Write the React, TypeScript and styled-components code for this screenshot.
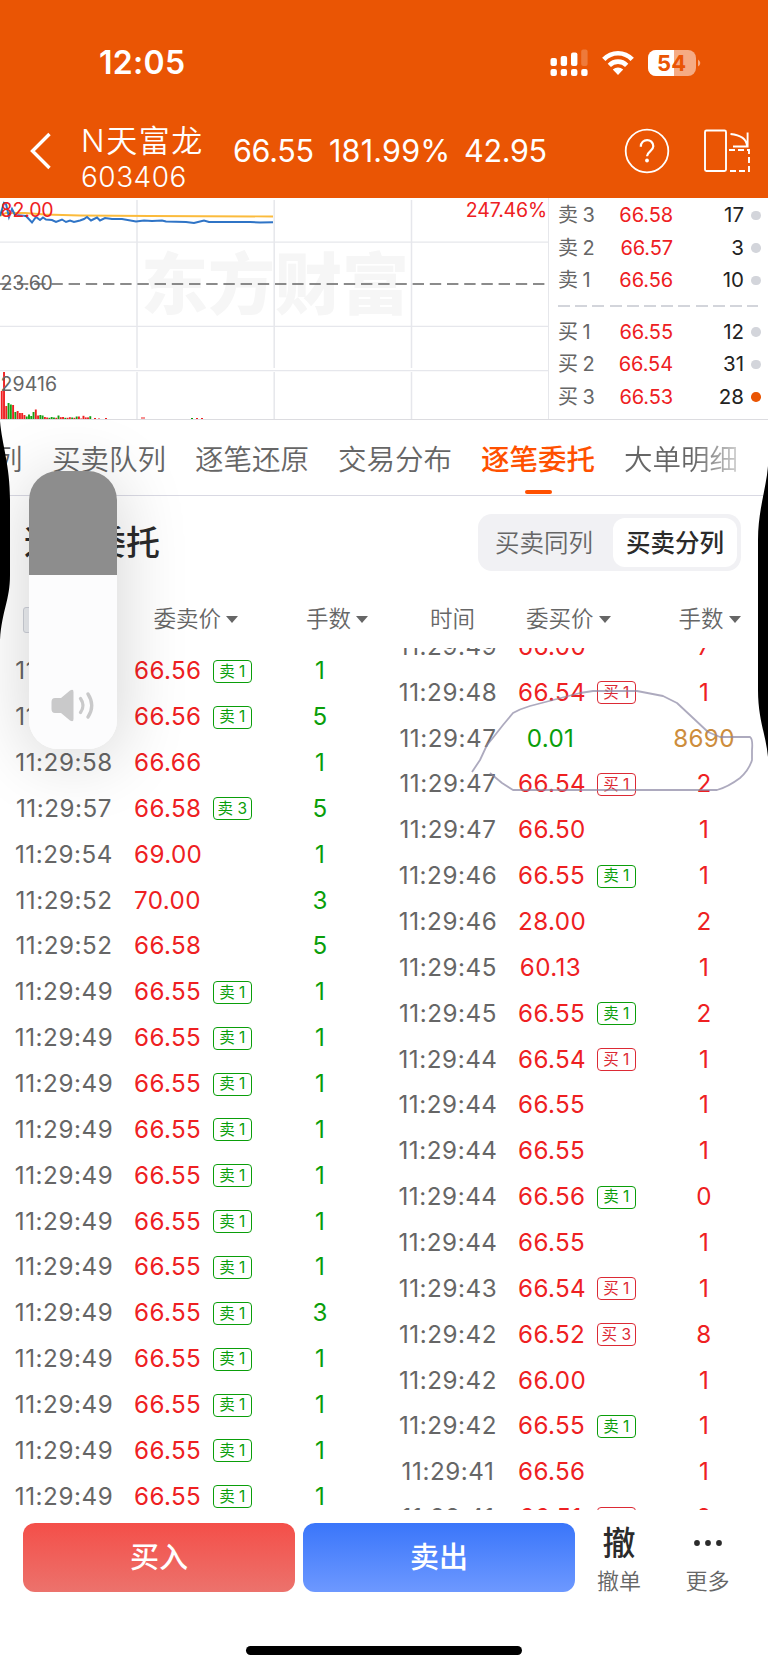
import React from "react";
import styled, { createGlobalStyle, css } from "styled-components";

const ORANGE = "#ea5504";
const RED = "#ee2022";
const GREEN = "#0a9e0a";
const GREY = "#666666";

const GlobalStyle = createGlobalStyle`
  * { box-sizing: border-box; }
  body {
    margin: 0;
    background: #fff;
    font-family: Inter, "Noto Sans CJK SC", sans-serif;
    line-height: 1;
    color: #2b2b2b;
  }
`;

const Screen = styled.div`
  position: relative;
  width: 768px;
  height: 1670px;
  overflow: hidden;
  background: #fff;
  white-space: nowrap;
`;

/* ---------- header ---------- */

const Header = styled.header`
  height: 198px;
  background: ${ORANGE};
  color: #fff;
`;

const StatusBar = styled.div`
  display: flex;
  align-items: center;
  justify-content: space-between;
  height: 105px;
  padding: 20px 67px 0 99px;
`;

const Clock = styled.span`
  font-size: 32px;
  font-weight: 600;
  letter-spacing: 0.3px;
`;

const StatusIcons = styled.div`
  display: flex;
  align-items: center;
  gap: 14px;
`;

const NavBar = styled.div`
  display: flex;
  align-items: center;
  height: 92px;
`;

const BackIcon = styled.svg`
  flex: none;
  margin-left: 29px;
`;

const StockName = styled.div`
  display: flex;
  flex-direction: column;
  width: 152px;
  margin: 14px 0 0 28px;
  gap: 7px;
  font-size: 31px;
  font-weight: 350;
  letter-spacing: 1.6px;
`;

const StockCode = styled.span`
  font-size: 28px;
  letter-spacing: 0.5px;
`;

const Quote = styled.span<{ $w: number; $wide?: boolean }>`
  width: ${(p) => p.$w}px;
  font-size: 30.5px;
  font-weight: 370;
  letter-spacing: ${(p) => (p.$wide ? 0.2 : -0.3)}px;
`;

const NavIcons = styled.div`
  display: flex;
  align-items: center;
  gap: 33px;
  margin-left: auto;
  padding-right: 17px;
`;

/* ---------- chart and order book ---------- */

const Market = styled.section`
  display: flex;
  height: 222px;
  border-bottom: 1.5px solid #dcdce0;
`;

const Chart = styled.svg`
  flex: none;
  display: block;
  width: 548px;
  height: 221px;
`;

const Book = styled.div`
  flex: 1;
  padding-left: 9px;
  border-left: 1px solid #e6e7eb;
`;

const BookRow = styled.div`
  display: flex;
  align-items: center;
  height: 32.5px;
  font-size: 20.5px;
`;

const BookGroup = styled.div`
  &:first-child { padding-top: 1px; }
`;

const BookLabel = styled.span`
  width: 52px;
  color: ${GREY};
  font-size: 20px;
  word-spacing: -1px;
`;

const BookPrice = styled.span`
  width: 63px;
  text-align: right;
  color: ${RED};
  font-size: 20px;
  letter-spacing: -0.1px;
`;

const BookQty = styled.span`
  width: 71px;
  text-align: right;
  color: #222;
`;

const Dot = styled.i<{ $hot?: boolean }>`
  width: 9.5px;
  height: 9.5px;
  margin-left: 7px;
  border-radius: 50%;
  background: ${(p) => (p.$hot ? ORANGE : "#d3d5db")};
`;

const BookDivider = styled.div`
  height: 2px;
  margin: 8px 10px 9px 0;
  background: repeating-linear-gradient(90deg, #d3d5db 0 12px, transparent 12px 17.2px);
`;

/* ---------- tabs ---------- */

const Tabs = styled.nav`
  display: flex;
  align-items: stretch;
  gap: 29px;
  height: 76px;
  margin: 0;
  padding-left: 53px;
  border-bottom: 1.5px solid #d9d9e3;
`;

const Tab = styled.div<{ $active?: boolean; $first?: boolean; $fade?: boolean }>`
  position: relative;
  flex: none;
  width: 114px;
  font-size: 28.5px;
  line-height: 80px;
  color: ${GREY};
  font-weight: 350;
  ${(p) => p.$first && css`
    width: 28.5px;
    margin-left: -59px;
    margin-right: 0.5px;
  `}
  ${(p) => p.$active && css`
    color: #ff5000;
    font-weight: 500;
    &::after {
      content: "";
      position: absolute;
      left: 43.5px;
      bottom: 1px;
      width: 27px;
      height: 4px;
      border-radius: 2px;
      background: #ff5000;
    }
  `}
  ${(p) => p.$fade && css`
    color: transparent;
    background: linear-gradient(90deg, ${GREY} 60%, #d0d0d0 100%);
    background-clip: text;
    -webkit-background-clip: text;
  `}
`;

/* ---------- section title ---------- */

const TitleRow = styled.div`
  display: flex;
  align-items: center;
  justify-content: space-between;
  height: 93px;
  padding: 0 27px 0 24px;
`;

const Title = styled.h2`
  margin: 1px 0 0;
  font-size: 34px;
  font-weight: 500;
`;

const Segmented = styled.div`
  display: flex;
  width: 263px;
  height: 57px;
  padding: 4px;
  border-radius: 14px;
  background: #f1f1f4;
`;

const Segment = styled.div<{ $on?: boolean }>`
  display: flex;
  align-items: center;
  justify-content: center;
  width: ${(p) => (p.$on ? 124 : 124)}px;
  margin-right: ${(p) => (p.$on ? 0 : 7)}px;
  padding-top: 1px;
  font-size: 24.5px;
  border-radius: 12px;
  font-weight: ${(p) => (p.$on ? 500 : 350)};
  color: ${(p) => (p.$on ? "#2b2b2b" : GREY)};
  background: ${(p) => (p.$on ? "#fff" : "transparent")};
`;

/* ---------- order tables ---------- */

const Columns = styled.div`
  display: grid;
  grid-template-columns: 384px 384px;
`;

const TableHead = styled.div<{ $side: "sell" | "buy" }>`
  display: flex;
  align-items: center;
  height: 59px;
  padding: 2px 0 0 ${(p) => (p.$side === "sell" ? 23 : 46)}px;
  color: ${GREY};
  font-size: 22.5px;
  font-weight: 350;
`;

const HeadCell = styled.div<{ $w: number }>`
  display: flex;
  align-items: center;
  gap: 5px;
  width: ${(p) => p.$w}px;
`;

const TimeToggle = styled.div`
  width: 92px;
  height: 26px;
  margin-right: 38.5px;
  border: 1px solid #cfd2da;
  border-radius: 3px;
  background: #eef0f4;
`;

const Caret = styled.i`
  border: 6px solid transparent;
  border-top: 7px solid #666;
  border-bottom: 0;
`;

const Viewport = styled.div`
  height: 862px;
  overflow: hidden;
`;

const Rows = styled.div<{ $side: "sell" | "buy" }>`
  margin-top: ${(p) => (p.$side === "sell" ? 0.4 : -24)}px;
`;

const OrderRow = styled.div`
  display: grid;
  grid-template-columns: 100px 68px 38px 1fr;
  column-gap: 17px;
  align-items: center;
  height: 45.87px;
  padding-left: 14px;
  font-size: 24.2px;
`;

const Time = styled.span`
  text-align: center;
  color: ${GREY};
  letter-spacing: 0.55px;
`;

const Price = styled.span<{ $down?: boolean }>`
  padding-left: 3px;
  text-align: center;
  letter-spacing: 0.4px;
  color: ${(p) => (p.$down ? GREEN : RED)};
`;

const Badge = styled.span<{ $sell?: boolean }>`
  display: flex;
  align-items: center;
  justify-content: center;
  width: 38.5px;
  height: 23px;
  margin-left: -3px;
  border: 1px solid currentColor;
  border-radius: 4px;
  font-size: 15.5px;
  word-spacing: 0;
  color: ${(p) => (p.$sell ? GREEN : "#dc2a35")};
`;

const Qty = styled.span<{ $tone: string }>`
  width: 98px;
  text-align: center;
  letter-spacing: 0.3px;
  color: ${(p) => p.$tone};
`;

/* ---------- footer ---------- */

const Footer = styled.footer`
  display: flex;
  align-items: flex-start;
  height: 160px;
  padding: 13px 0 0 23px;
`;

const TradeButton = styled.div<{ $kind: "buy" | "sell" }>`
  display: flex;
  align-items: center;
  justify-content: center;
  width: 272px;
  height: 69px;
  margin-right: 8px;
  border-radius: 12px;
  color: #fff;
  font-size: 29px;
  font-weight: 500;
  background: ${(p) =>
    p.$kind === "buy"
      ? "linear-gradient(#f44f49, #ec726c)"
      : "linear-gradient(#3a76fa, #6d98ff)"};
`;

const FooterAction = styled.div<{ $w: number }>`
  display: flex;
  flex-direction: column;
  align-items: center;
  width: ${(p) => p.$w}px;
  margin-top: 2.5px;
  color: ${GREY};
  font-size: 22px;
  font-weight: 350;
`;

const FooterGlyph = styled.div`
  display: flex;
  align-items: center;
  height: 35px;
  margin-bottom: 9px;
  color: #2b2b2b;
  font-size: 33px;
  font-weight: 500;
`;

const HomeIndicator = styled.div`
  position: absolute;
  left: 246px;
  bottom: 15px;
  width: 276px;
  height: 9.5px;
  border-radius: 5px;
  background: #000;
`;

/* ---------- overlays ---------- */

const Overlay = styled.svg`
  position: absolute;
  inset: 0;
  pointer-events: none;
`;

const VolumeSlider = styled.div`
  position: absolute;
  left: 29px;
  top: 471px;
  width: 88px;
  height: 278px;
  border-radius: 29px;
  overflow: hidden;
  background: linear-gradient(#8d8d8d 0 104px, #fcfcfd 104px);
`;

const SliderShadow = styled.div`
  position: absolute;
  left: 29px;
  top: 471px;
  width: 88px;
  height: 278px;
  border-radius: 29px;
  box-shadow: 0 8px 70px rgba(0, 0, 0, 0.18);
`;

const SpeakerIcon = styled.svg`
  position: absolute;
  left: 21px;
  bottom: 24px;
`;

type Order = [time: string, price: string, badge: string, qty: string];

const sells: Order[] = [
  ["11:29:58", "66.56", "卖 1", "1"],
  ["11:29:58", "66.56", "卖 1", "5"],
  ["11:29:58", "66.66", "", "1"],
  ["11:29:57", "66.58", "卖 3", "5"],
  ["11:29:54", "69.00", "", "1"],
  ["11:29:52", "70.00", "", "3"],
  ["11:29:52", "66.58", "", "5"],
  ...Array.from({ length: 12 }, (_, i): Order => ["11:29:49", "66.55", "卖 1", i === 7 ? "3" : "1"]),
];

const buys: Order[] = [
  ["11:29:49", "66.00", "", "7"],
  ["11:29:48", "66.54", "买 1", "1"],
  ["11:29:47", "0.01", "", "8690"],
  ["11:29:47", "66.54", "买 1", "2"],
  ["11:29:47", "66.50", "", "1"],
  ["11:29:46", "66.55", "卖 1", "1"],
  ["11:29:46", "28.00", "", "2"],
  ["11:29:45", "60.13", "", "1"],
  ["11:29:45", "66.55", "卖 1", "2"],
  ["11:29:44", "66.54", "买 1", "1"],
  ["11:29:44", "66.55", "", "1"],
  ["11:29:44", "66.55", "", "1"],
  ["11:29:44", "66.56", "卖 1", "0"],
  ["11:29:44", "66.55", "", "1"],
  ["11:29:43", "66.54", "买 1", "1"],
  ["11:29:42", "66.52", "买 3", "8"],
  ["11:29:42", "66.00", "", "1"],
  ["11:29:42", "66.55", "卖 1", "1"],
  ["11:29:41", "66.56", "", "1"],
  ["11:29:41", "66.51", "买 3", "2"],
];

const asks = [["卖 3", "66.58", "17"], ["卖 2", "66.57", "3"], ["卖 1", "66.56", "10"]];
const bids = [["买 1", "66.55", "12"], ["买 2", "66.54", "31"], ["买 3", "66.53", "28"]];

/* volume bars as [height, rising], 2.27px apart */
const volumes: [number, boolean][] = [
  [28, true], [47, true], [13, true], [16, false], [14.5, false], [14, true], [7, false], [8, true],
  [6, true], [6, true], [4, true], [2.5, false], [4.5, false], [3, false], [7, false], [9.5, true],
  [3.5, true], [4, false], [3.5, false], [2, true], [1.5, true], [1.2, false], [2, false], [1.5, false],
  [1.2, true], [3.5, false], [1.8, true], [2, true], [1.2, false], [1.2, true], [1.8, true], [1.5, false],
  [1.2, true], [2.5, false], [2.5, true], [0.5, true], [3.2, true], [1.6, true], [1.6, true], [2.8, false],
];

const StatusGlyphs = () => (
  <StatusIcons>
    <svg width="38" height="28" viewBox="0 0 38 28" fill="#fff">
      <rect x="0.5" y="9" width="6.4" height="8" rx="2" />
      <rect x="10.7" y="7" width="6.4" height="10" rx="2" />
      <rect x="21" y="3.5" width="6.4" height="13.5" rx="2" />
      <rect x="31.2" y="0.5" width="6.4" height="16.5" rx="2" opacity="0.22" />
      {[0.5, 10.7, 21, 31.2].map((x) => (
        <rect key={x} x={x} y="20" width="6.4" height="7" rx="2" />
      ))}
    </svg>
    <svg width="32" height="26" viewBox="0 0 32 26" fill="none" stroke="#fff" strokeWidth="4.6">
      <path d="M1.8 9.4C9.6 1.1 22.4 1.1 30.2 9.4" />
      <path d="M7.3 15.3C12.2 10.4 19.8 10.4 24.7 15.3" />
      <path d="M16 25L10.8 19.6C13.7 16.9 18.3 16.9 21.2 19.6Z" fill="#fff" stroke="none" />
    </svg>
    <svg width="53" height="28" viewBox="0 0 53 28">
      <rect x="0" y="1" width="48" height="26" rx="8" fill="#f5ab84" />
      <path d="M8 1H26V27H8A8 8 0 0 1 0 19V9A8 8 0 0 1 8 1Z" fill="#fff" />
      <path d="M50 10.5Q52.3 12 52.3 14T50 17.5Z" fill="#f5ab84" />
      <text x="23.6" y="22" textAnchor="middle" fontSize="22" fontWeight="700" fill={ORANGE}>54</text>
    </svg>
  </StatusIcons>
);

const MinuteChart = () => (
  <Chart viewBox="0 198 548 221">
    <text x="275" y="309" textAnchor="middle" fontSize="67" fontWeight="900" fill="#f6f6f6"
      fontFamily='"Noto Sans CJK SC", sans-serif' textLength="268">东方财富</text>
    <g stroke="#e6e7ec" strokeWidth="1.5">
      <path d="M0 242.2H548M0 326.3H548M0 370.6H548" strokeWidth="1.2" />
      <path d="M137 200V368M137 372V419M274.2 200V368M274.2 372V419M411.5 200V368M411.5 372V419" />
    </g>
    <path d="M0 284H548" stroke="#666" strokeWidth="1.5" strokeDasharray="11.4 5.8" strokeDashoffset="0.2" />
    {volumes.map(([h, up], i) => (
      <rect key={i} x={0.8 + i * 2.27} y={419 - h} width="1.9" height={h} fill={up ? RED : "#15a015"} />
    ))}
    <path d="M94 418.5h2M98.5 418.5h1M105 418.5h2M141 418h4M196 418.5h2M201 418.5h2" stroke={RED} />
    <path d="M191 418.5h2" stroke={GREEN} />
    <path d="M0 216L6 213L25 213L45 214.5L80 215.5L150 216L273 216.5" fill="none" stroke="#fbbb3c" strokeWidth="1.9" />
    <path
      d="M0 216L4 203L6 204L9 217L12 209L15 215L26 216L32 222.5L36 217L40 220L43 217.5L46 219.5L52 220L56 222L62 219.5L66 222L70 220.5L74 222L80 220.5L84 219L87 217L91 220.5L97 217.5L100 220.5L105 218L112 219L122 219L136 221.5L144 220.5L152 221L162 220.5L166 221.5L186 222L194 223L204 220.5L209 222L230 222L250 222L260 222.5L273 222.3"
      fill="none" stroke="#2f74c6" strokeWidth="2"
    />
    <g fontSize="19.5" letterSpacing="-0.15">
      <text x="0.5" y="217.3" fill={RED}>82.00</text>
      <text x="0.5" y="290.3" fill={GREY}>23.60</text>
      <text x="0.5" y="391" fill={GREY} letterSpacing="0.1">29416</text>
      <text x="547" y="217.3" fill={RED} textAnchor="end">247.46%</text>
    </g>
  </Chart>
);

const BookLines = ({ lines }: { lines: string[][] }) => (
  <BookGroup>
    {lines.map(([label, price, qty]) => (
      <BookRow key={label}>
        <BookLabel>{label}</BookLabel>
        <BookPrice>{price}</BookPrice>
        <BookQty>{qty}</BookQty>
        <Dot $hot={label === "买 3"} />
      </BookRow>
    ))}
  </BookGroup>
);

const OrderList = ({ side, orders }: { side: "sell" | "buy"; orders: Order[] }) => (
  <Viewport>
    <Rows $side={side}>
      {orders.map(([time, price, badge, qty], i) => (
        <OrderRow key={i}>
          <Time>{time}</Time>
          <Price $down={price === "0.01"}>{price}</Price>
          {badge ? <Badge $sell={badge.startsWith("卖")}>{badge}</Badge> : <span />}
          <Qty $tone={qty === "8690" ? "#cd8d3c" : side === "sell" ? GREEN : RED}>{qty}</Qty>
        </OrderRow>
      ))}
    </Rows>
  </Viewport>
);

export default function App() {
  return (
    <Screen>
      <GlobalStyle />
      <Header>
        <StatusBar>
          <Clock>12:05</Clock>
          <StatusGlyphs />
        </StatusBar>
        <NavBar>
          <BackIcon width="24" height="38" viewBox="0 0 24 38" fill="none" stroke="#fff" strokeWidth="3.4">
            <path d="M20.5 2L3.5 19L20.5 36" />
          </BackIcon>
          <StockName>
            <span>N天富龙</span>
            <StockCode>603406</StockCode>
          </StockName>
          <Quote $w={96}>66.55</Quote>
          <Quote $w={135} $wide>181.99%</Quote>
          <Quote $w={90}>42.95</Quote>
          <NavIcons>
            <svg width="46" height="46" viewBox="0 0 46 46" fill="none" stroke="#fff" strokeWidth="1.8">
              <circle cx="23" cy="23" r="21.3" />
              <path d="M16.8 18.8C16.8 10 29.3 10 29.3 18.3C29.3 23.3 23 23.4 23 28.3" strokeWidth="2.2" />
              <circle cx="23" cy="32.5" r="1.9" fill="#fff" stroke="none" />
            </svg>
            <svg width="48" height="46" viewBox="0 0 48 46" fill="none" stroke="#fff" strokeWidth="1.9">
              <rect x="2" y="2.5" width="21" height="40.5" rx="1.5" />
              <path d="M27.5 6C37 7 43.5 11 44 18M44.6 4.5V18.5H30" />
              <path d="M26 22H46V43H24" strokeDasharray="6 3" />
            </svg>
          </NavIcons>
        </NavBar>
      </Header>

      <Market>
        <MinuteChart />
        <Book>
          <BookLines lines={asks} />
          <BookDivider />
          <BookLines lines={bids} />
        </Book>
      </Market>

      <Tabs>
        <Tab $first>列</Tab>
        <Tab>买卖队列</Tab>
        <Tab>逐笔还原</Tab>
        <Tab>交易分布</Tab>
        <Tab $active>逐笔委托</Tab>
        <Tab $fade>大单明细</Tab>
      </Tabs>

      <TitleRow>
        <Title>逐笔委托</Title>
        <Segmented>
          <Segment>买卖同列</Segment>
          <Segment $on>买卖分列</Segment>
        </Segmented>
      </TitleRow>

      <Columns>
        <div>
          <TableHead $side="sell">
            <TimeToggle />
            <HeadCell $w={152.5}>委卖价<Caret /></HeadCell>
            <HeadCell $w={70}>手数<Caret /></HeadCell>
          </TableHead>
          <OrderList side="sell" orders={sells} />
        </div>
        <div>
          <TableHead $side="buy">
            <HeadCell $w={96}>时间</HeadCell>
            <HeadCell $w={152.5}>委买价<Caret /></HeadCell>
            <HeadCell $w={70}>手数<Caret /></HeadCell>
          </TableHead>
          <OrderList side="buy" orders={buys} />
        </div>
      </Columns>

      <Footer>
        <TradeButton $kind="buy">买入</TradeButton>
        <TradeButton $kind="sell">卖出</TradeButton>
        <FooterAction $w={72}>
          <FooterGlyph>撤</FooterGlyph>
          撤单
        </FooterAction>
        <FooterAction $w={105}>
          <FooterGlyph>
            <svg width="30" height="8" viewBox="0 0 30 8" fill="#2b2b2b">
              <circle cx="4" cy="4" r="2.9" />
              <circle cx="15" cy="4" r="2.9" />
              <circle cx="26" cy="4" r="2.9" />
            </svg>
          </FooterGlyph>
          更多
        </FooterAction>
      </Footer>
      <HomeIndicator />

      <SliderShadow />
      <Overlay width="768" height="1670" viewBox="0 0 768 1670">
        <path d="M0 421C2 445 10 465 10 500V575C10 600 2 610 0 640Z" />
        <path d="M768 466C766 490 758 510 758 540V690C758 720 766 735 768 757Z" />
        <path
          d="M472 772L480 760L487 745L492 739L503 725L513 713Q520 709 530 706L557 699L580 693L593 691H637L663 696L677 703L692 717L708 732L720 737H750Q753 739 752 750V760Q749 770 740 778Q728 787 717 790H513L502 783L490 773"
          fill="none" stroke="#8a86a3" strokeOpacity="0.7" strokeWidth="1.8" strokeLinejoin="round"
        />
      </Overlay>
      <VolumeSlider>
        <SpeakerIcon width="46" height="38" viewBox="0 0 46 38" fill="none" stroke="#c9c9ca" strokeWidth="3.3" strokeLinecap="round">
          <path d="M5 11H11L20 3.5Q23.5 1.5 23.5 5V32Q23.5 35.5 20 33.5L11 26H5Q1.5 26 1.5 22V15Q1.5 11 5 11Z" fill="#c9c9ca" stroke="none" />
          <path d="M30.5 11.5Q35.5 18.5 30.5 25.5" />
          <path d="M38 7Q45.5 18.5 38 30" />
        </SpeakerIcon>
      </VolumeSlider>
    </Screen>
  );
}
